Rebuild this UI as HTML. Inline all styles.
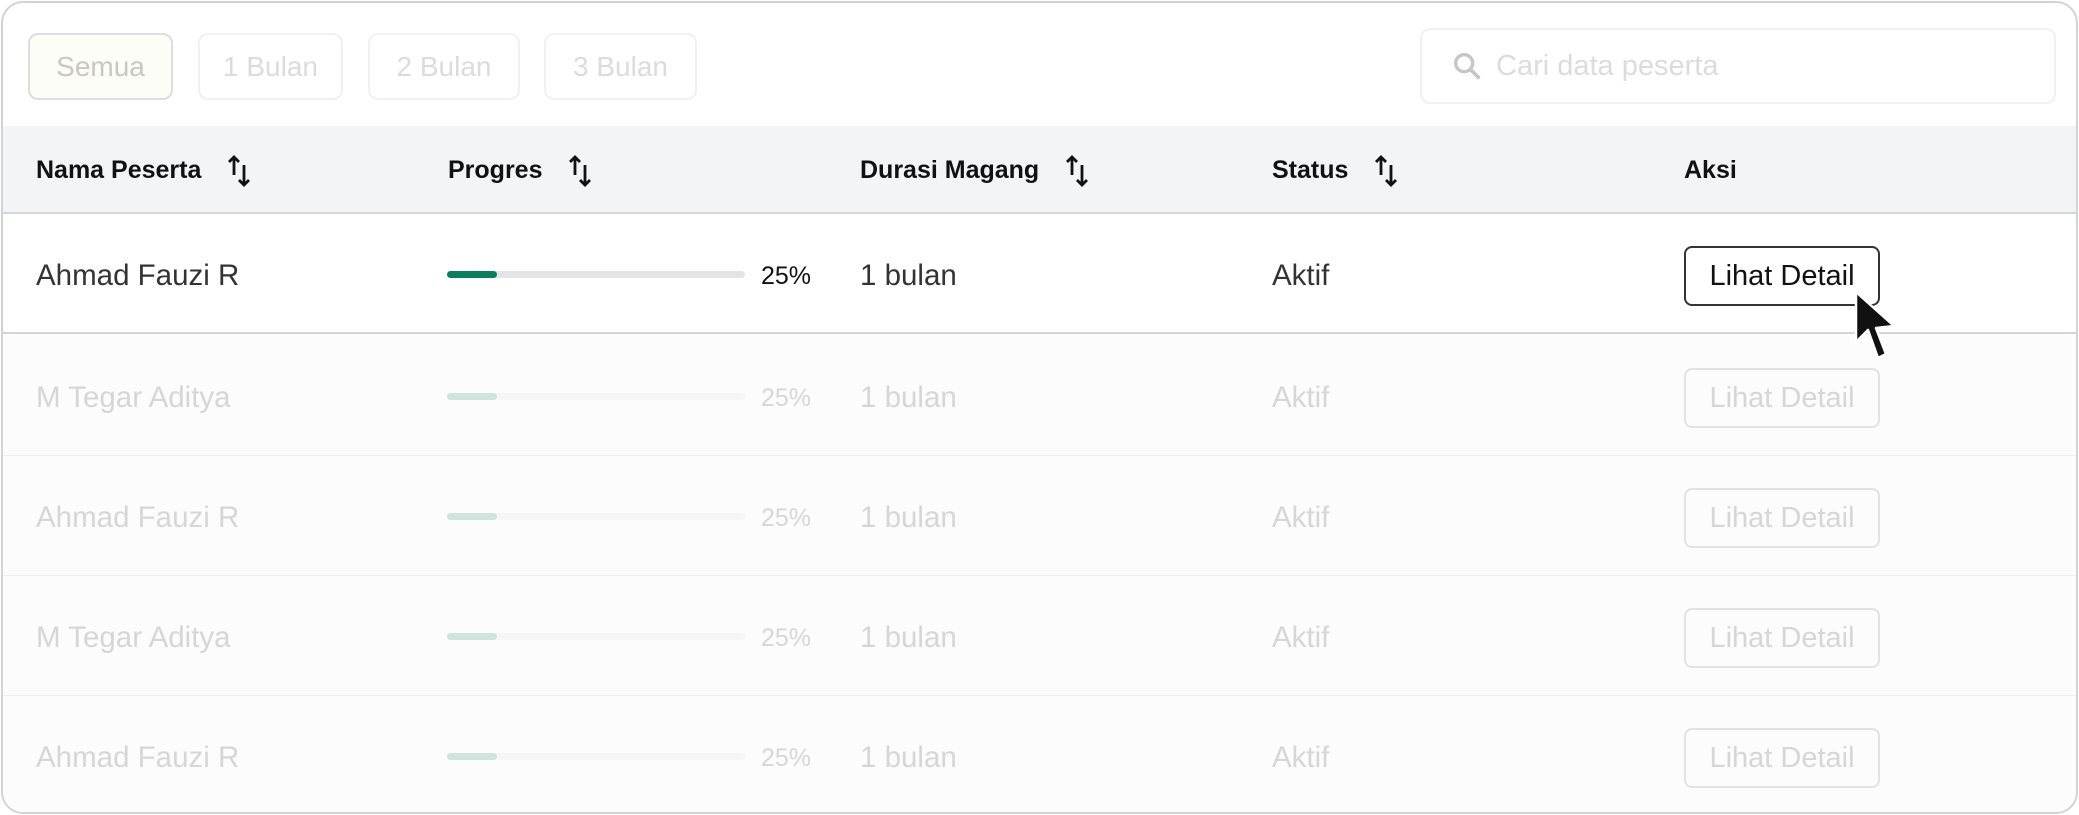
<!DOCTYPE html>
<html><head><meta charset="utf-8"><style>
*{margin:0;padding:0;box-sizing:border-box}
body{width:2079px;height:815px;background:#fff;font-family:"Liberation Sans",sans-serif;position:relative;overflow:hidden}
.card{position:absolute;left:1px;top:1px;width:2077px;height:813px;border:2px solid #d2d3da;border-radius:22px;overflow:hidden;background:#fff}
.abs{position:absolute}
.fb{position:absolute;top:30px;height:67px;border:2px solid #f1f1f1;border-radius:10px;color:#dcdcdc;font-size:28px;display:flex;align-items:center;justify-content:center}
.head{position:absolute;left:0;top:123px;width:100%;height:88px;background:#f3f4f6;border-bottom:2px solid #d4d4de}
.ht{position:absolute;top:0;height:88px;display:flex;align-items:center;font-weight:bold;font-size:25px;color:#111}
.row{position:absolute;left:0;width:100%;height:120px;border-bottom:1px solid #ededed}
.cell{position:absolute;top:2px;height:120px;display:flex;align-items:center;font-size:29.5px}
.bar{position:absolute;left:444px;width:298px;height:7px;border-radius:4px}
.bar i{position:absolute;left:0;top:0;width:50px;height:7px;border-radius:4px}
.btn{position:absolute;left:1681px;width:196px;height:60px;border:2px solid;border-radius:8px;display:flex;align-items:center;justify-content:center;font-size:29px}
</style></head><body>
<div class="card">
<div class="fb" style="left:25px;width:145px;background:#fdfdf8;border-color:#ddd;color:#c8c8c0">Semua</div>
<div class="fb" style="left:195px;width:145px">1 Bulan</div>
<div class="fb" style="left:365px;width:152px">2 Bulan</div>
<div class="fb" style="left:541px;width:153px">3 Bulan</div>
<div class="fb" style="left:1417px;width:636px;top:25px;height:76px;justify-content:flex-start;padding-left:28px;font-size:29px">
<svg width="34" height="34" viewBox="0 0 24 24" style="margin-right:12px"><circle cx="10" cy="10" r="6" fill="none" stroke="#c6c6c6" stroke-width="2.4"/><path d="M14.5 14.5L20 20" stroke="#c6c6c6" stroke-width="2.6" stroke-linecap="round"/></svg>Cari data peserta</div>
<div class="head">
<div class="ht" style="left:33px">Nama Peserta<svg style="margin-left:24px" width="28" height="34" viewBox="0 0 28 34"><path d="M9 22V4M4 9l5-5 5 5M19 12v20M14 27l5 5 5-5" fill="none" stroke="#111" stroke-width="2.8"/></svg></div>
<div class="ht" style="left:445px">Progres<svg style="margin-left:24px" width="28" height="34" viewBox="0 0 28 34"><path d="M9 22V4M4 9l5-5 5 5M19 12v20M14 27l5 5 5-5" fill="none" stroke="#111" stroke-width="2.8"/></svg></div>
<div class="ht" style="left:857px">Durasi Magang<svg style="margin-left:24px" width="28" height="34" viewBox="0 0 28 34"><path d="M9 22V4M4 9l5-5 5 5M19 12v20M14 27l5 5 5-5" fill="none" stroke="#111" stroke-width="2.8"/></svg></div>
<div class="ht" style="left:1269px">Status<svg style="margin-left:24px" width="28" height="34" viewBox="0 0 28 34"><path d="M9 22V4M4 9l5-5 5 5M19 12v20M14 27l5 5 5-5" fill="none" stroke="#111" stroke-width="2.8"/></svg></div>
<div class="ht" style="left:1681px">Aksi</div>
</div>

<div class="row" style="top:211px;border-bottom:2px solid #d4d4de;background:#fff">
<div class="cell" style="left:33px;color:#333">Ahmad Fauzi R</div>
<div class="bar" style="top:57px;background:#e3e4e8"><i style="background:#0a7e5e"></i></div>
<div class="cell" style="left:758px;font-size:25px;color:#111">25%</div>
<div class="cell" style="left:857px;color:#333">1 bulan</div>
<div class="cell" style="left:1269px;color:#333">Aktif</div>
<div class="btn" style="top:32px;border-color:#333;color:#111">Lihat Detail</div>
</div>

<div class="row" style="top:333px;background:#fcfcfc">
<div class="cell" style="left:33px;color:#d6d6d6">M Tegar Aditya</div>
<div class="bar" style="top:57px;background:#f5f5f5"><i style="background:#cde5dc"></i></div>
<div class="cell" style="left:758px;font-size:25px;color:#d6d6d6">25%</div>
<div class="cell" style="left:857px;color:#d6d6d6">1 bulan</div>
<div class="cell" style="left:1269px;color:#d6d6d6">Aktif</div>
<div class="btn" style="top:32px;border-color:#e2e2e2;color:#d6d6d6">Lihat Detail</div>
</div>
<div class="row" style="top:453px;background:#fcfcfc">
<div class="cell" style="left:33px;color:#d6d6d6">Ahmad Fauzi R</div>
<div class="bar" style="top:57px;background:#f5f5f5"><i style="background:#cde5dc"></i></div>
<div class="cell" style="left:758px;font-size:25px;color:#d6d6d6">25%</div>
<div class="cell" style="left:857px;color:#d6d6d6">1 bulan</div>
<div class="cell" style="left:1269px;color:#d6d6d6">Aktif</div>
<div class="btn" style="top:32px;border-color:#e2e2e2;color:#d6d6d6">Lihat Detail</div>
</div>
<div class="row" style="top:573px;background:#fcfcfc">
<div class="cell" style="left:33px;color:#d6d6d6">M Tegar Aditya</div>
<div class="bar" style="top:57px;background:#f5f5f5"><i style="background:#cde5dc"></i></div>
<div class="cell" style="left:758px;font-size:25px;color:#d6d6d6">25%</div>
<div class="cell" style="left:857px;color:#d6d6d6">1 bulan</div>
<div class="cell" style="left:1269px;color:#d6d6d6">Aktif</div>
<div class="btn" style="top:32px;border-color:#e2e2e2;color:#d6d6d6">Lihat Detail</div>
</div>
<div class="row" style="top:693px;background:#fcfcfc;border-bottom:none">
<div class="cell" style="left:33px;color:#d6d6d6">Ahmad Fauzi R</div>
<div class="bar" style="top:57px;background:#f5f5f5"><i style="background:#cde5dc"></i></div>
<div class="cell" style="left:758px;font-size:25px;color:#d6d6d6">25%</div>
<div class="cell" style="left:857px;color:#d6d6d6">1 bulan</div>
<div class="cell" style="left:1269px;color:#d6d6d6">Aktif</div>
<div class="btn" style="top:32px;border-color:#e2e2e2;color:#d6d6d6">Lihat Detail</div>
</div>
</div>
<svg class="abs" style="left:1850px;top:290px" width="48" height="72" viewBox="0 0 48 72"><path d="M6 2L6 52L18 40L28 68L36 64L26 38L44 36Z" fill="#111" stroke="#fff" stroke-width="2.5" stroke-linejoin="round"/></svg>
</body></html>
